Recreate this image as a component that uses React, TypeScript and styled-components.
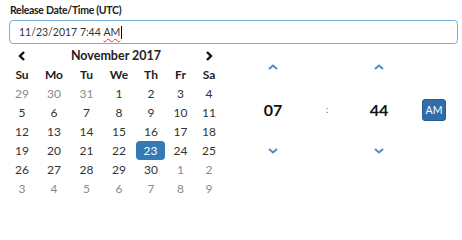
import React from "react";
import styled, { createGlobalStyle } from "styled-components";

const GlobalStyle = createGlobalStyle`
  html, body {
    margin: 0;
    padding: 0;
    background: #fff;
    font-family: Lato, "Open Sans", sans-serif;
    color: #333;
  }
`;

const Page = styled.div`
  width: 462px;
  height: 204px;
  padding: 4px 4px 0 9px;
  box-sizing: border-box;
`;

const Label = styled.label`
  display: block;
  font-size: 10.5px;
  font-weight: 700;
  letter-spacing: -0.3px;
  line-height: 12px;
  margin: 0 0 4px 1px;
  color: #222;
`;

const Input = styled.div`
  width: 449px;
  height: 24px;
  box-sizing: border-box;
  border: 1px solid #74b0dc;
  border-radius: 4px;
  padding: 0 9px;
  display: flex;
  align-items: center;
  font-size: 10.5px;
  color: #333;
`;

const Misspelled = styled.span`
  text-decoration: underline wavy #e33;
  text-decoration-thickness: 1px;
  text-underline-offset: 2px;
`;

const Caret = styled.span`
  display: inline-block;
  width: 1px;
  height: 13px;
  background: #000;
  margin-left: 1px;
`;

const Widget = styled.div`
  display: flex;
  margin-top: 2px;
  margin-left: -3px;
`;

const Calendar = styled.div`
  display: grid;
  grid-template-columns: 32px 32px 33px 32px 32px 27px 30px;
  grid-auto-rows: 19px;
  width: 218px;
`;

const NavButton = styled.div`
  display: flex;
  align-items: center;
  justify-content: center;
`;

const Title = styled.div`
  grid-column: span 5;
  display: flex;
  align-items: center;
  justify-content: center;
  font-size: 12.5px;
  font-weight: 700;
  color: #222;
`;

const Dow = styled.div`
  display: flex;
  align-items: center;
  justify-content: center;
  font-size: 12px;
  font-weight: 700;
  color: #222;
`;

const Day = styled.div<{ $muted?: boolean; $active?: boolean }>`
  display: flex;
  align-items: center;
  justify-content: center;
  font-size: 12px;
  margin: 0 ${(p) => (p.$active ? "2px 0 1px" : "0")};
  border-radius: 4px;
  color: ${(p) => (p.$active ? "#fff" : p.$muted ? "#8a8a8a" : "#333")};
  background: ${(p) => (p.$active ? "#337ab7" : "transparent")};
`;

const Time = styled.div`
  display: grid;
  grid-template-columns: 82px 26px 78px 32px;
  grid-template-rows: 42px 42px 42px;
  margin-left: 8px;
`;

const Cell = styled.div`
  display: flex;
  align-items: center;
  justify-content: center;
`;

const Value = styled(Cell)`
  font-size: 16px;
  font-weight: 700;
  color: #111;
`;

const Colon = styled(Cell)`
  font-size: 9px;
  color: #666;
`;

const AmButton = styled.div`
  width: 24px;
  height: 22px;
  margin-top: 2px;
  box-sizing: border-box;
  border: 1px solid #285e8e;
  border-radius: 3px;
  background: #2f6ea8;
  color: #fff;
  font-size: 10.5px;
  display: flex;
  align-items: center;
  justify-content: center;
`;

const Chevron = ({ dir }: { dir: "up" | "down" | "left" | "right" }) => {
  if (dir === "left" || dir === "right") {
    return (
      <svg width="8" height="10" viewBox="0 0 8 10">
        <polyline
          points={dir === "left" ? "6,1 2,5 6,9" : "2,1 6,5 2,9"}
          fill="none"
          stroke="#111"
          strokeWidth="2.4"
        />
      </svg>
    );
  }
  return (
    <svg width="10" height="6" viewBox="0 0 10 6">
      <polyline
        points={dir === "up" ? "1,5 5,1.5 9,5" : "1,1 5,4.5 9,1"}
        fill="none"
        stroke="#4a8ccc"
        strokeWidth="2"
      />
    </svg>
  );
};

const dows = ["Su", "Mo", "Tu", "We", "Th", "Fr", "Sa"];

const days: { n: number; muted?: boolean }[] = [
  { n: 29, muted: true },
  { n: 30, muted: true },
  { n: 31, muted: true },
  ...Array.from({ length: 30 }, (_, i) => ({ n: i + 1 })),
  ...Array.from({ length: 9 }, (_, i) => ({ n: i + 1, muted: true })),
];

export default function App() {
  return (
    <Page>
      <GlobalStyle />
      <Label>Release Date/Time (UTC)</Label>
      <Input>
        11/23/2017 7:44&nbsp;<Misspelled>AM</Misspelled>
        <Caret />
      </Input>
      <Widget>
        <Calendar>
          <NavButton>
            <Chevron dir="left" />
          </NavButton>
          <Title>November 2017</Title>
          <NavButton>
            <Chevron dir="right" />
          </NavButton>
          {dows.map((d) => (
            <Dow key={d}>{d}</Dow>
          ))}
          {days.map((d, i) => (
            <Day key={i} $muted={d.muted} $active={!d.muted && d.n === 23}>
              {d.n}
            </Day>
          ))}
        </Calendar>
        <Time>
          <Cell>
            <Chevron dir="up" />
          </Cell>
          <Cell />
          <Cell>
            <Chevron dir="up" />
          </Cell>
          <Cell />
          <Value>07</Value>
          <Colon>:</Colon>
          <Value>44</Value>
          <Cell>
            <AmButton>AM</AmButton>
          </Cell>
          <Cell>
            <Chevron dir="down" />
          </Cell>
          <Cell />
          <Cell>
            <Chevron dir="down" />
          </Cell>
          <Cell />
        </Time>
      </Widget>
    </Page>
  );
}
